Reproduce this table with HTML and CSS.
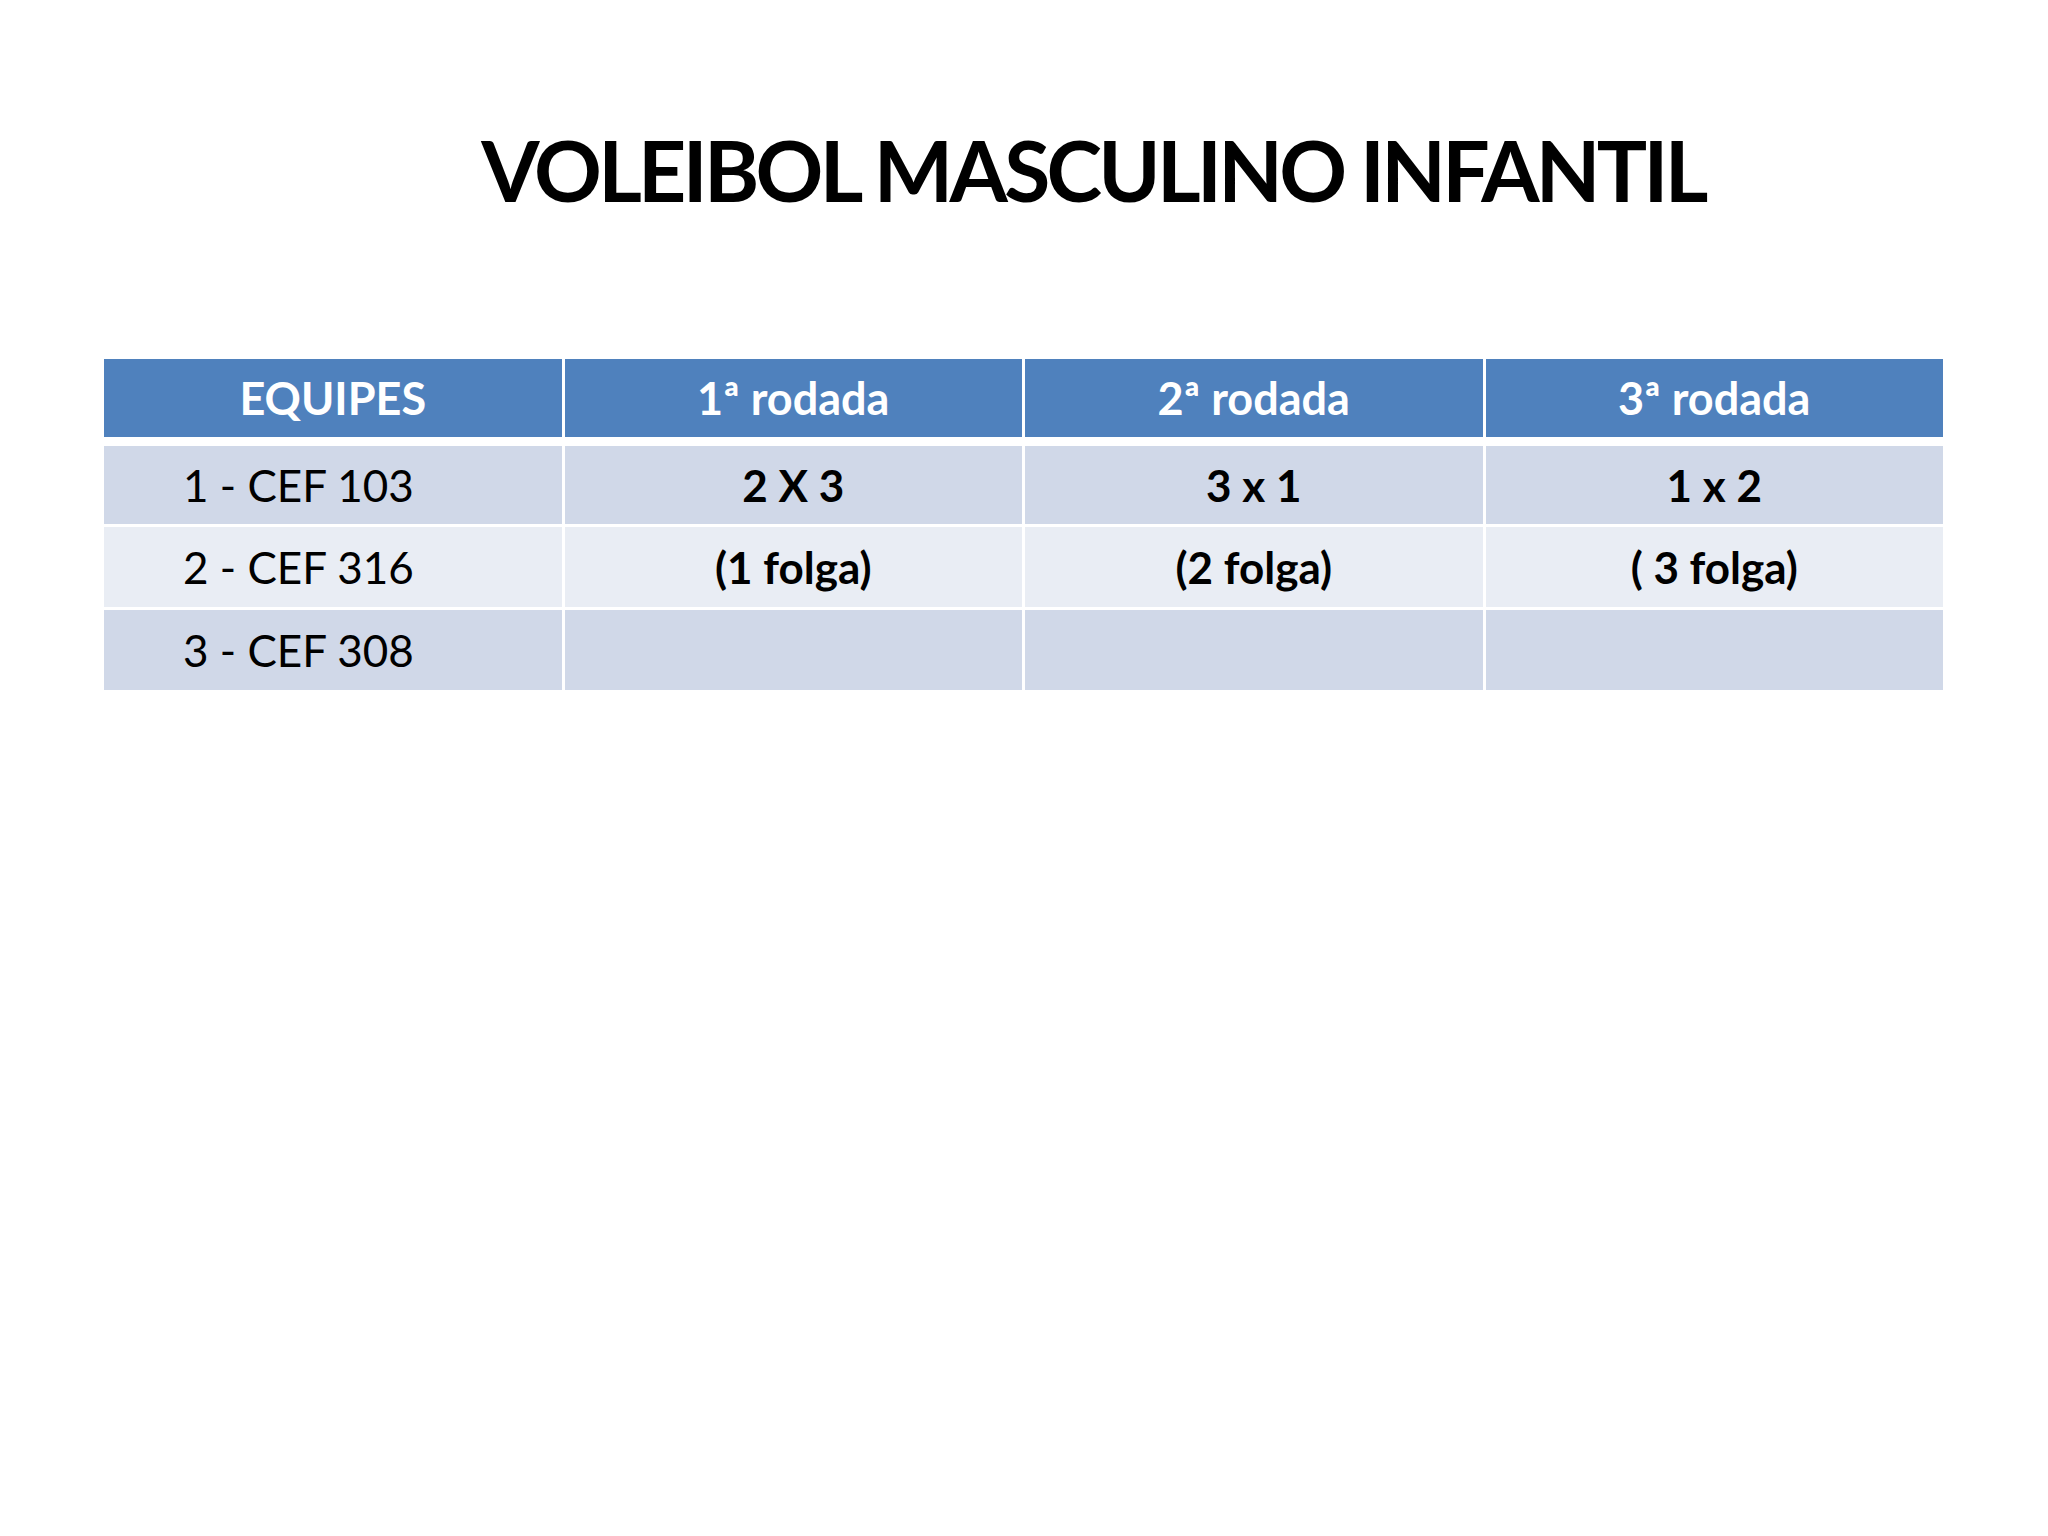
FILE: index.html
```html
<!DOCTYPE html>
<html lang="pt">
<head>
<meta charset="utf-8">
<title>Voleibol Masculino Infantil</title>
<link rel="stylesheet" href="styles.css">
</head>
<body>
<main class="slide">
  <h1 class="title">VOLEIBOL MASCULINO INFANTIL</h1>
  <div class="table">
    <div class="cell head">EQUIPES</div>
    <div class="cell head">1ª rodada</div>
    <div class="cell head">2ª rodada</div>
    <div class="cell head">3ª rodada</div>

    <div class="cell odd team">1 - CEF 103</div>
    <div class="cell odd game">2 X 3</div>
    <div class="cell odd game">3 x 1</div>
    <div class="cell odd game">1 x 2</div>

    <div class="cell even team">2 - CEF 316</div>
    <div class="cell even game">(1 folga)</div>
    <div class="cell even game">(2 folga)</div>
    <div class="cell even game">( 3 folga)</div>

    <div class="cell odd team">3 - CEF 308</div>
    <div class="cell odd game"></div>
    <div class="cell odd game"></div>
    <div class="cell odd game"></div>
  </div>
</main>
</body>
</html>
```
FILE: styles.css
```css
html, body {
  margin: 0;
  padding: 0;
  background: #ffffff;
}

.slide {
  width: 2048px;
  height: 1536px;
  box-sizing: border-box;
  padding-top: 120px;
  font-family: Lato, "Open Sans", "Noto Sans", sans-serif;
  color: #000;
}

.title {
  margin: 0;
  padding-left: 138px;
  text-align: center;
  font-size: 84px;
  line-height: 1.2;
  font-weight: 700;
  letter-spacing: -3.7px;
}

.table {
  margin: 138px 0 0 104px;
  width: 1839px;
  display: grid;
  grid-template-columns: repeat(4, 1fr);
  grid-template-rows: 84px 78px 80px 80px;
  column-gap: 3px;
  row-gap: 3px;
}

.cell {
  display: flex;
  align-items: center;
  justify-content: center;
  font-size: 44px;
}

.head {
  background: #4f81bd;
  color: #ffffff;
  font-weight: 700;
  font-size: 45px;
  margin-bottom: 6px;
}

.odd {
  background: #d0d8e8;
}

.even {
  background: #e9edf4;
}

.team {
  justify-content: flex-start;
  padding-left: 79px;
  font-weight: 400;
}

.game {
  font-weight: 700;
}
```
